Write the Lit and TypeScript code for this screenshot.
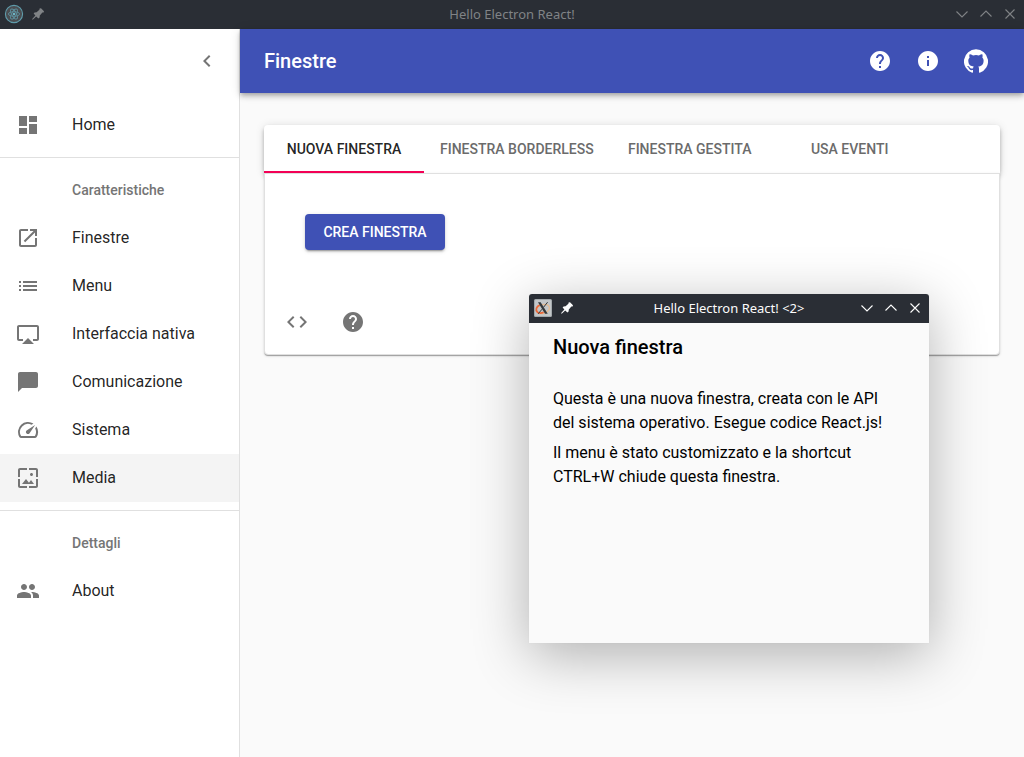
import { LitElement, html, css, svg } from "lit";
import { customElement, property, state } from "lit/decorators.js";
import { classMap } from "lit/directives/class-map.js";

const icons: Record<string, string> = {
  dashboard: "M3 13h8V3H3v10zm0 8h8v-6H3v6zm10 0h8V11h-8v10zm0-18v6h8V3h-8z",
  open: "M19 19H5V5h7V3H5c-1.11 0-2 .9-2 2v14c0 1.1.89 2 2 2h14c1.1 0 2-.9 2-2v-7h-2v7zM14 3v2h3.59l-9.83 9.83 1.41 1.41L19 6.41V10h2V3h-7z",
  list: "M3 13h2v-2H3v2zm0 4h2v-2H3v2zm0-8h2V7H3v2zm4 4h14v-2H7v2zm0 4h14v-2H7v2zM7 7v2h14V7H7z",
  airplay: "M6 22h12l-6-6zM21 3H3c-1.1 0-2 .9-2 2v12c0 1.1.9 2 2 2h4v-2H3V5h18v12h-4v2h4c1.1 0 2-.9 2-2V5c0-1.1-.9-2-2-2z",
  chat: "M20 2H4c-1.1 0-2 .9-2 2v18l4-4h14c1.1 0 2-.9 2-2V4c0-1.1-.9-2-2-2z",
  speed: "M20.38 8.57l-1.23 1.85a8 8 0 0 1-.22 7.58H5.07A8 8 0 0 1 15.58 6.85l1.85-1.23A10 10 0 0 0 3.35 19a2 2 0 0 0 1.72 1h13.85a2 2 0 0 0 1.74-1 10 10 0 0 0-.27-10.44zM10.59 15.41a2 2 0 0 0 2.83 0l5.66-8.49-8.49 5.66a2 2 0 0 0 0 2.83z",
  wallpaper: "M4 4h7V2H4c-1.1 0-2 .9-2 2v7h2V4zm6 9l-4 5h12l-3-4-2.03 2.71L10 13zm7-4.5c0-.83-.67-1.5-1.5-1.5S14 7.67 14 8.5s.67 1.5 1.5 1.5S17 9.33 17 8.5zM20 2h-7v2h7v7h2V4c0-1.1-.9-2-2-2zm0 18h-7v2h7c1.1 0 2-.9 2-2v-7h-2v7zM4 13H2v7c0 1.1.9 2 2 2h7v-2H4v-7z",
  people: "M16 11c1.66 0 2.99-1.34 2.99-3S17.66 5 16 5c-1.66 0-3 1.34-3 3s1.34 3 3 3zm-8 0c1.66 0 2.99-1.34 2.99-3S9.66 5 8 5C6.34 5 5 6.34 5 8s1.34 3 3 3zm0 2c-2.33 0-7 1.17-7 3.5V19h14v-2.5c0-2.33-4.67-3.5-7-3.5zm8 0c-.29 0-.62.02-.97.05 1.16.84 1.97 1.97 1.97 3.45V19h6v-2.5c0-2.33-4.67-3.5-7-3.5z",
  help: "M12 2C6.48 2 2 6.48 2 12s4.48 10 10 10 10-4.48 10-10S17.52 2 12 2zm1 17h-2v-2h2v2zm2.07-7.75l-.9.92C13.45 12.9 13 13.5 13 15h-2v-.5c0-1.1.45-2.1 1.17-2.83l1.24-1.26c.37-.36.59-.86.59-1.41 0-1.1-.9-2-2-2s-2 .9-2 2H8c0-2.21 1.79-4 4-4s4 1.79 4 4c0 .88-.36 1.68-.93 2.25z",
  info: "M12 2C6.48 2 2 6.48 2 12s4.48 10 10 10 10-4.48 10-10S17.52 2 12 2zm1 15h-2v-6h2v6zm0-8h-2V7h2v2z",
  github: "M12 .3a12 12 0 0 0-3.8 23.4c.6.1.8-.3.8-.6v-2c-3.3.7-4-1.6-4-1.6-.6-1.4-1.4-1.8-1.4-1.8-1-.7.1-.7.1-.7 1.2 0 1.9 1.2 1.9 1.2 1 1.8 2.8 1.3 3.5 1 0-.8.4-1.3.7-1.6-2.7-.3-5.5-1.3-5.5-6 0-1.2.5-2.3 1.3-3.1-.2-.4-.6-1.6 0-3.2 0 0 1-.3 3.4 1.2a11.5 11.5 0 0 1 6 0c2.3-1.5 3.3-1.2 3.3-1.2.6 1.6.2 2.8 0 3.2.9.8 1.3 1.9 1.3 3.2 0 4.6-2.8 5.6-5.5 5.9.5.4.9 1 .9 2.2v3.3c0 .3.1.7.8.6A12 12 0 0 0 12 .3",
  code: "M9.4 16.6L4.8 12l4.6-4.6L8 6l-6 6 6 6 1.4-1.4zm5.2 0l4.6-4.6-4.6-4.6L16 6l6 6-6 6-1.4-1.4z",
  chevron: "M15.41 7.41L14 6l-6 6 6 6 1.41-1.41L10.83 12z",
};

const icon = (name: string) => html`
  <svg class="icon" viewBox="0 0 24 24" width="24" height="24" aria-hidden="true">
    <path d=${icons[name]}></path>
  </svg>
`;

const electronLogo = svg`
  <circle cx="10" cy="10" r="8.6" fill="#4b4e52" stroke="#5f9cab" stroke-width="1.1"/>
  <g fill="none" stroke="#5d909d" stroke-width="0.9">
    <ellipse cx="10" cy="10" rx="5.6" ry="2.3"/>
    <ellipse cx="10" cy="10" rx="5.6" ry="2.3" transform="rotate(60 10 10)"/>
    <ellipse cx="10" cy="10" rx="5.6" ry="2.3" transform="rotate(120 10 10)"/>
  </g>
  <circle cx="10" cy="10" r="1.3" fill="#6db5c5"/>`;

const xorgLogo = svg`
  <rect x="1" y="1" width="18" height="18" rx="1.5" fill="#a4a9ac"/>
  <rect x="2" y="2" width="16" height="16" rx="1" fill="#c3c7c9"/>
  <ellipse cx="10" cy="11" rx="6.6" ry="4.4" fill="none" stroke="#e6bb92" stroke-width="1.3" transform="rotate(-18 10 11)"/>
  <path d="M6.800 7C3.200 8.400 2.200 12 4.400 14.100c1.600 1.400 4.200 1.100 6.200.2" fill="none" stroke="#e9683b" stroke-width="1.700"/>
  <path d="M5 4.200h2.700l7 11.600H12z" fill="#34383b"/>
  <path d="M14.600 4.200 10.600 9.200M9 11.200l-3.800 4.600" fill="none" stroke="#34383b" stroke-width="1"/>`;

@customElement("title-bar")
class TitleBar extends LitElement {
  @property() heading = "";
  @property() logo = "electron";

  static styles = css`
    :host {
      display: grid;
      grid-template-columns: 1fr auto 1fr;
      align-items: center;
      height: 29px;
      padding: 0 2px 1px;
      box-sizing: border-box;
      background: #2a2e35;
      color: var(--title-color, #808386);
      font: 13px/18px "Noto Sans", sans-serif;
    }
    .group {
      display: flex;
    }
    .end {
      justify-content: flex-end;
    }
    .slot {
      display: flex;
      align-items: center;
      justify-content: center;
      width: 24px;
      height: 24px;
      padding: 0;
      border: 0;
      background: none;
      color: inherit;
    }
    .line {
      fill: none;
      stroke: currentColor;
      stroke-width: 1.1;
    }
    .solid {
      fill: currentColor;
    }
  `;

  render() {
    return html`
      <div class="group">
        <span class="slot">
          <svg width="20" height="20" viewBox="0 0 20 20" aria-hidden="true">
            ${this.logo === "electron" ? electronLogo : xorgLogo}
          </svg>
        </span>
        <button class="slot" aria-label="Fissa">
          <svg class="solid" width="16" height="16" viewBox="0 0 16 16" aria-hidden="true">
            <path d="M9.6 2.6 11 2.2 14 5.2 13.6 6.4 12.4 6.6 9.8 9.4 9.6 11.4 8.4 12.4 6.2 10.4 3 13.4 2.2 13.8 2.4 12.8 5.4 9.6 3.6 7.6 4.6 6.4 6.6 6.2 9.4 3.8z"/>
          </svg>
        </button>
      </div>
      <span>${this.heading}</span>
      <div class="group end">
        <button class="slot" aria-label="Riduci">
          <svg class="line" width="16" height="16" viewBox="0 0 16 16"><path d="M2.5 5.5 8 11l5.5-5.5"/></svg>
        </button>
        <button class="slot" aria-label="Ingrandisci">
          <svg class="line" width="16" height="16" viewBox="0 0 16 16"><path d="M2.5 10.5 8 5l5.5 5.5"/></svg>
        </button>
        <button class="slot" aria-label="Chiudi">
          <svg class="line" width="16" height="16" viewBox="0 0 16 16"><path d="M3.5 3.5l9 9M12.5 3.5l-9 9"/></svg>
        </button>
      </div>
    `;
  }
}

interface NavItem {
  label: string;
  icon: string;
}

const sections: { title?: string; items: NavItem[] }[] = [
  { items: [{ label: "Home", icon: "dashboard" }] },
  {
    title: "Caratteristiche",
    items: [
      { label: "Finestre", icon: "open" },
      { label: "Menu", icon: "list" },
      { label: "Interfaccia nativa", icon: "airplay" },
      { label: "Comunicazione", icon: "chat" },
      { label: "Sistema", icon: "speed" },
      { label: "Media", icon: "wallpaper" },
    ],
  },
  { title: "Dettagli", items: [{ label: "About", icon: "people" }] },
];

const tabs = ["Nuova finestra", "Finestra borderless", "Finestra gestita", "Usa eventi"];

@customElement("app-root")
class AppRoot extends LitElement {
  @state() private tab = 0;
  @state() private highlighted = "Media";

  static styles = css`
    :host {
      display: flex;
      flex-direction: column;
      position: relative;
      min-height: 100vh;
      background: #fafafa;
      color: rgba(0, 0, 0, 0.87);
      font: 16px/24px Roboto, sans-serif;
    }
    .icon {
      display: block;
      flex: none;
      fill: currentColor;
    }
    .shell {
      display: flex;
      flex: 1;
    }
    .drawer {
      flex: none;
      width: 240px;
      box-sizing: border-box;
      border-right: 1px solid #e0e0e0;
      background: #fff;
    }
    .drawer-head {
      display: flex;
      align-items: center;
      justify-content: flex-end;
      height: 64px;
      padding-right: 8px;
    }
    .icon-button {
      display: flex;
      padding: 12px;
      border: 0;
      background: none;
      color: #757575;
    }
    .section {
      margin: 0;
      padding: 8px 0;
      list-style: none;
    }
    .section + .section {
      border-top: 1px solid #e0e0e0;
    }
    .subheader {
      padding-left: 72px;
      color: #757575;
      font-size: 14px;
      font-weight: 500;
      line-height: 48px;
    }
    .nav-link {
      display: flex;
      align-items: center;
      gap: 32px;
      height: 48px;
      padding: 0 16px;
      color: inherit;
      text-decoration: none;
    }
    .nav-link.active {
      background: #f4f4f4;
    }
    .nav-link .icon {
      color: #757575;
    }
    .main {
      flex: 1;
      min-width: 0;
    }
    .app-bar {
      display: flex;
      align-items: center;
      height: 64px;
      padding: 0 24px;
      position: relative;
      background: #3f51b5;
      color: #fff;
      box-shadow: 0 2px 4px -1px rgba(0, 0, 0, 0.2), 0 4px 5px rgba(0, 0, 0, 0.14),
        0 1px 10px rgba(0, 0, 0, 0.12);
    }
    .app-bar .icon-button {
      color: inherit;
    }
    .page-title {
      flex: 1;
      margin: 0;
      font-size: 20px;
      font-weight: 500;
      line-height: 32px;
    }
    .content {
      padding: 32px 24px;
    }
    .tabs {
      display: flex;
      background: #fff;
      border-radius: 4px 4px 0 0;
      box-shadow: 0 2px 4px -1px rgba(0, 0, 0, 0.2), 0 4px 5px rgba(0, 0, 0, 0.14),
        0 1px 10px rgba(0, 0, 0, 0.12);
    }
    .tab {
      min-width: 160px;
      height: 48px;
      padding: 0 16px;
      border: 0;
      background: none;
      color: #6b6b6b;
      font: 500 14px/24px Roboto, sans-serif;
      text-transform: uppercase;
      white-space: nowrap;
    }
    .tab.selected {
      color: rgba(0, 0, 0, 0.87);
      box-shadow: inset 0 -2px #f50057;
    }
    .panel {
      position: relative;
      border: 1px solid #e0e0e0;
      border-radius: 0 0 4px 4px;
      background: #fff;
      box-shadow: 0 2px 1px -1px rgba(0, 0, 0, 0.2), 0 1px 1px rgba(0, 0, 0, 0.14),
        0 1px 3px rgba(0, 0, 0, 0.12);
    }
    .panel-body {
      padding: 40px;
    }
    .primary {
      display: block;
      min-width: 140px;
      height: 36px;
      padding: 0 16px;
      border: 0;
      border-radius: 4px;
      background: #3f51b5;
      color: #fff;
      font: 500 14px/24px Roboto, sans-serif;
      text-transform: uppercase;
      box-shadow: 0 3px 1px -2px rgba(0, 0, 0, 0.2), 0 2px 2px rgba(0, 0, 0, 0.14),
        0 1px 5px rgba(0, 0, 0, 0.12);
    }
    .actions {
      display: flex;
      gap: 8px;
      padding: 8px;
    }
    .window {
      --title-color: #fcfcfc;
      position: absolute;
      left: 529px;
      top: 294px;
      width: 400px;
      border-radius: 3px 3px 0 0;
      overflow: hidden;
      background: #fafafa;
      color: #000;
      box-shadow: 0 12px 56px rgba(0, 0, 0, 0.3), 0 0 1px rgba(0, 0, 0, 0.1);
    }
    .window-body {
      min-height: 320px;
      box-sizing: border-box;
      padding: 8px 32px 8px 24px;
    }
    .window-title {
      margin: 0 0 24px;
      font-size: 20px;
      font-weight: 500;
      line-height: 32px;
    }
    .text {
      margin: 0 0 6px;
    }
  `;

  private renderSection(section: { title?: string; items: NavItem[] }) {
    return html`
      <ul class="section">
        ${section.title ? html`<li class="subheader">${section.title}</li>` : ""}
        ${section.items.map(
          (item) => html`
            <li>
              <a
                href="#"
                class=${classMap({ "nav-link": true, active: item.label === this.highlighted })}
                @mouseenter=${() => (this.highlighted = item.label)}
                >${icon(item.icon)}<span>${item.label}</span></a
              >
            </li>
          `
        )}
      </ul>
    `;
  }

  render() {
    return html`
      <title-bar heading="Hello Electron React!"></title-bar>
      <div class="shell">
        <nav class="drawer">
          <div class="drawer-head">
            <button class="icon-button" aria-label="Chiudi menu">${icon("chevron")}</button>
          </div>
          ${sections.map((section) => this.renderSection(section))}
        </nav>
        <main class="main">
          <header class="app-bar">
            <h1 class="page-title">Finestre</h1>
            <button class="icon-button" aria-label="Aiuto">${icon("help")}</button>
            <button class="icon-button" aria-label="Informazioni">${icon("info")}</button>
            <a class="icon-button" href="#" aria-label="GitHub">${icon("github")}</a>
          </header>
          <div class="content">
            <div class="tabs" role="tablist">
              ${tabs.map(
                (label, i) => html`
                  <button
                    role="tab"
                    aria-selected=${i === this.tab}
                    class=${classMap({ tab: true, selected: i === this.tab })}
                    @click=${() => (this.tab = i)}
                  >
                    ${label}
                  </button>
                `
              )}
            </div>
            <section class="panel">
              <div class="panel-body">
                <button class="primary">Crea finestra</button>
              </div>
              <div class="actions">
                <button class="icon-button" aria-label="Codice">${icon("code")}</button>
                <button class="icon-button" aria-label="Aiuto">${icon("help")}</button>
              </div>
            </section>
          </div>
        </main>
      </div>
      <section class="window" role="dialog" aria-label="Nuova finestra">
        <title-bar heading="Hello Electron React! &lt;2&gt;" logo="xorg"></title-bar>
        <div class="window-body">
          <h2 class="window-title">Nuova finestra</h2>
          <p class="text">
            Questa è una nuova finestra, creata con le API del sistema operativo. Esegue codice
            React.js!
          </p>
          <p class="text">
            Il menu è stato customizzato e la shortcut CTRL+W chiude questa finestra.
          </p>
        </div>
      </section>
    `;
  }
}
